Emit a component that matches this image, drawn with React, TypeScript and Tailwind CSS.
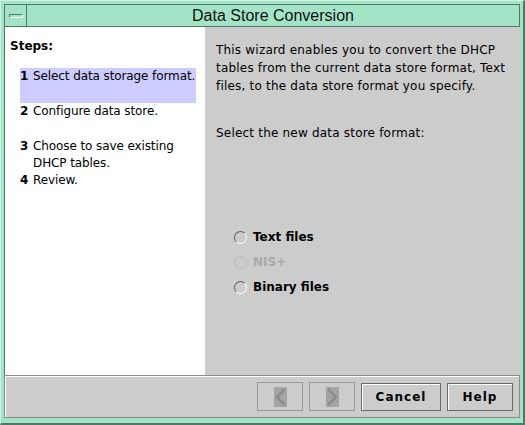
import React from 'react';

const steps = [
  { n: '1', lines: ['Select data storage format.'], active: true, h: 'h-[35px]' },
  { n: '2', lines: ['Configure data store.'], active: false, h: 'h-[35px]' },
  { n: '3', lines: ['Choose to save existing', 'DHCP tables.'], active: false, h: '' },
  { n: '4', lines: ['Review.'], active: false, h: '' },
];

const formats = [
  { label: 'Text files', disabled: false },
  { label: 'NIS+', disabled: true },
  { label: 'Binary files', disabled: false },
];

const Radio = ({ disabled }: { disabled: boolean }) => (
  <span
    className={`inline-block w-[13px] h-[13px] rounded-full border ${
      disabled ? 'border-[#b8b8b8]' : 'border-[#5e5e5e] border-r-white border-b-white'
    } bg-[#cccccc]`}
  />
);

const Chevron = ({ dir }: { dir: 'left' | 'right' }) => (
  <span className="flex w-[13px] h-[20px] bg-[#a4a4a4] items-center justify-center">
    <svg width="13" height="20" viewBox="0 0 13 20">
      <path
        d={dir === 'left' ? 'M11 2 L3 10 L11 18' : 'M2 2 L10 10 L2 18'}
        fill="none"
        stroke="#8c8c8c"
        strokeWidth="2.5"
      />
    </svg>
  </span>
);

export default function App() {
  return (
    <div className="w-[525px] h-[425px] bg-[#a3e4c7] flex flex-col border-l border-t border-[#d2f3e4] border-r-2 border-b-2 border-r-[#4c7a66] border-b-[#4c7a66] font-['DejaVu_Sans',sans-serif] text-black overflow-hidden">
      {/* title bar */}
      <div className="h-[26px] flex pt-[3px] pl-[3px] pr-[3px] shrink-0">
        <div className="w-[23px] h-[23px] border border-[#4c7a66] flex items-center justify-center">
          <span className="block w-[14px] h-[4px] border border-[#4c7a66] border-b-white border-r-white bg-[#a3e4c7]" />
        </div>
        <div className="flex-1 h-[23px] border-t border-b border-r border-[#4c7a66] flex items-center justify-center">
          <span className="font-['Liberation_Sans',sans-serif] text-[16px] leading-none text-[#111]">
            Data Store Conversion
          </span>
        </div>
      </div>

      {/* content */}
      <div className="flex flex-col flex-1 pl-[3px] pr-[3px] pb-[5px]">
        <div className="flex h-[348px] border-l border-[#4c7a66]">
          <div className="w-[200px] bg-white flex flex-col text-[12px]">
            <div className="pl-[5px] pt-[11px] font-bold leading-[17px]">Steps:</div>
            <div className="mt-[13px] flex flex-col">
              {steps.map((s) => (
                <div
                  key={s.n}
                  className={`ml-[15px] w-[176px] ${s.h} ${s.active ? 'bg-[#ccccff]' : ''} flex`}
                >
                  <span className="font-bold w-[13px] shrink-0 leading-[17px]">{s.n}</span>
                  <div className="flex flex-col">
                    {s.lines.map((l) => (
                      <span key={l} className="leading-[17px] whitespace-nowrap tracking-[-0.1px]">
                        {l}
                      </span>
                    ))}
                  </div>
                </div>
              ))}
            </div>
          </div>
          <div className="flex-1 bg-[#cccccc] flex flex-col text-[12px] pl-[11px] pt-[14px]">
            <p className="leading-[18px] tracking-[0.2px]">
              This wizard enables you to convert the DHCP
              <br />
              tables from the current data store format, Text
              <br />
              files, to the data store format you specify.
            </p>
            <p className="leading-[18px] mt-[29px] tracking-[0.2px]">Select the new data store format:</p>
            <div className="flex flex-col mt-[86px] ml-[18px] gap-[7px]">
              {formats.map((f) => (
                <label key={f.label} className="flex items-center gap-[6px] h-[18px]">
                  <Radio disabled={f.disabled} />
                  <span className={`font-bold ${f.disabled ? 'text-[#a8a8a8]' : 'text-black'}`}>
                    {f.label}
                  </span>
                </label>
              ))}
            </div>
          </div>
        </div>

        {/* button bar */}
        <div className="h-[43px] border border-[#8a8a8a] bg-[#cccccc] flex items-center justify-end pr-[6px] gap-[6px] shadow-[inset_1px_1px_0_#ffffff]">
          <button className="w-[46px] h-[29px] border border-[#9a9a9a] flex items-center justify-center">
            <Chevron dir="left" />
          </button>
          <button className="w-[46px] h-[29px] border border-[#9a9a9a] flex items-center justify-center">
            <Chevron dir="right" />
          </button>
          <button className="w-[80px] h-[28px] border border-[#6a6a6a] shadow-[inset_1px_1px_0_#ffffff] text-[12px] font-bold tracking-[1px] bg-[#cccccc]">
            Cancel
          </button>
          <button className="w-[66px] h-[28px] border border-[#6a6a6a] shadow-[inset_1px_1px_0_#ffffff] text-[12px] font-bold tracking-[1px] bg-[#cccccc]">
            Help
          </button>
        </div>
      </div>
    </div>
  );
}
